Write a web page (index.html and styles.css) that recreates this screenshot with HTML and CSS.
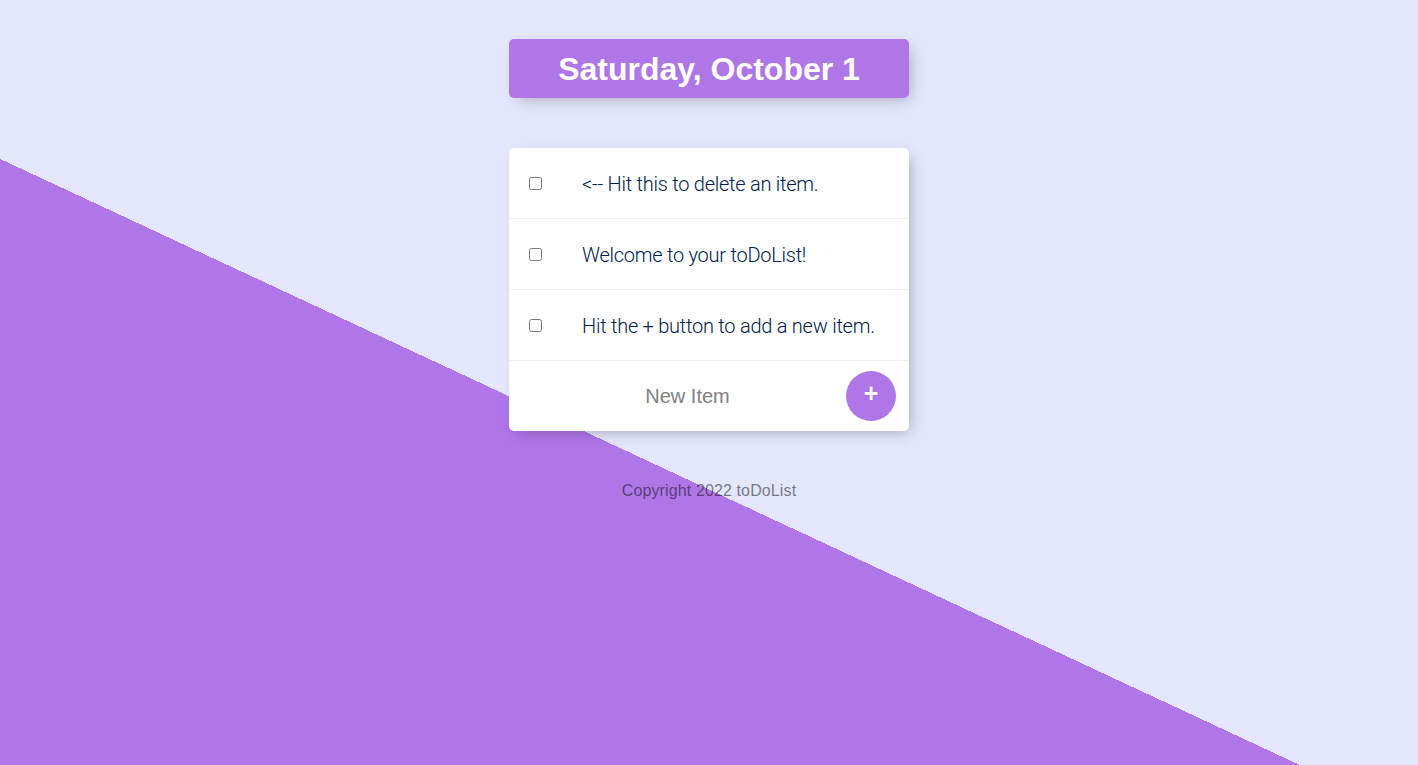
FILE: index.html
```html
<!DOCTYPE html>
<html lang="en">
<head>
<meta charset="utf-8">
<title>toDoList</title>
<link rel="stylesheet" href="styles.css">
</head>
<body>
<main class="page">
  <div class="box heading">
    <h1 class="title">Saturday, October 1</h1>
  </div>
  <div class="box list">
    <div class="item">
      <input class="check" type="checkbox">
      <p class="item-text">&lt;-- Hit this to delete an item.</p>
    </div>
    <div class="item">
      <input class="check" type="checkbox">
      <p class="item-text">Welcome to your toDoList!</p>
    </div>
    <div class="item">
      <input class="check" type="checkbox">
      <p class="item-text">Hit the + button to add a new item.</p>
    </div>
    <form class="item add-form">
      <input class="new-item" type="text" placeholder="New Item" autocomplete="off">
      <button class="add-btn" type="button">+</button>
    </form>
  </div>
  <footer class="footer">Copyright 2022 toDoList</footer>
</main>
</body>
</html>
```
FILE: styles.css
```css
html {
  height: 100%;
  background-color: #E4E6FD;
  background-image: linear-gradient(25deg, #AF76E8 50%, #E4E6FD 50%);
  background-size: 100% 979px;
  background-repeat: no-repeat;
  font-family: "Liberation Sans", Arial, sans-serif;
}

body {
  margin: 0;
}

.page {
  display: flex;
  flex-direction: column;
  align-items: center;
  padding-top: 39px;
}

.box {
  width: 400px;
  background: #fff;
  border-radius: 5px;
  box-shadow: 5px 5px 15px -5px rgba(0, 0, 0, 0.3);
}

.heading {
  background-color: #AF76E8;
  text-align: center;
  height: 59px;
  display: flex;
  align-items: center;
  justify-content: center;
}

.title {
  margin: 0;
  color: #fff;
  font-size: 32px;
  font-weight: 700;
  line-height: 1;
  padding-top: 1px;
}

.list {
  margin-top: 50px;
}

.item {
  min-height: 70px;
  display: flex;
  align-items: center;
  border-bottom: 1px solid #F1F1F1;
}

.item:last-child {
  border-bottom: 0;
}

.check {
  margin: 0 20px;
  width: 13px;
  height: 13px;
}

.item-text {
  margin: 0;
  padding: 2px 20px 0;
  font-size: 20px;
  font-weight: 300;
  letter-spacing: -0.25px;
  color: #00204a;
  font-family: "Roboto", "Liberation Sans", sans-serif;
}

.add-form {
  margin: 0;
  padding-left: 20px;
}

.new-item {
  text-align: center;
  height: 60px;
  border: none;
  background: transparent;
  font-size: 20px;
  font-family: "Liberation Sans", Arial, sans-serif;
  width: 313px;
  padding: 0 2px;
  margin: 0;
  outline: none;
}

.new-item::placeholder {
  color: grey;
  opacity: 1;
}

.add-btn {
  width: 50px;
  height: 50px;
  margin: 0;
  border-radius: 50%;
  border: 0;
  background-color: #AF76E8;
  color: #fff;
  font-size: 25px;
  font-weight: 700;
  font-family: "Liberation Sans", Arial, sans-serif;
  line-height: 1;
  padding: 0 0 5px;
  display: flex;
  align-items: center;
  justify-content: center;
}

.footer {
  margin-top: 51px;
  color: rgba(0, 0, 0, 0.5);
  font-size: 16px;
  letter-spacing: 0.12px;
  text-align: center;
}
```
